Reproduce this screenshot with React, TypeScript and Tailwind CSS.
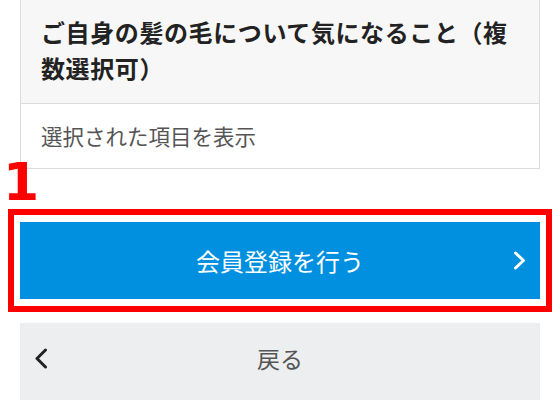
const ChevronRight = () => (
  <svg width="13" height="19" viewBox="0 0 13 19" fill="none" className="block">
    <polyline points="2.5,2 10.5,9.5 2.5,17" stroke="#ffffff" strokeWidth="3" strokeLinecap="round" strokeLinejoin="round" />
  </svg>
);

const ChevronLeft = () => (
  <svg width="14" height="21" viewBox="0 0 14 21" fill="none" className="block">
    <polyline points="11.5,2 3,10.5 11.5,19" stroke="#222222" strokeWidth="3" strokeLinecap="round" strokeLinejoin="round" />
  </svg>
);

export default function App() {
  return (
    <div className="w-[560px] h-[400px] overflow-hidden bg-white font-['Noto_Sans_CJK_JP','Noto_Sans',sans-serif]">
      <div className="flex flex-col px-5">
        {/* question card, its top lies above the viewport */}
        <div className="border-x border-b border-[#dcdcdc]">
          <div className="bg-[#f7f7f7] px-5 pt-[14px] pb-[17px] text-[24px] leading-[36px] font-bold tracking-[0.6px] text-[#222] border-b border-[#dcdcdc]">
            ご自身の髪の毛について気になること（複数選択可）
          </div>
          <div className="px-5 py-4 text-[21.5px] leading-8 text-[#555]">
            選択された項目を表示
          </div>
        </div>

        {/* annotated submit button */}
        <div className="relative -mx-3 mt-10">
          <span className="absolute -left-[5px] -top-[53px] text-[52px] leading-[52px] font-bold text-[#ff0000] font-['DejaVu_Sans',sans-serif]">
            1
          </span>
          <div className="border-[6px] border-[#ff0000] px-[6px] py-[7px]">
            <button className="grid h-[77px] w-full grid-cols-[1fr_auto_1fr] items-center bg-[#0090df] px-[14px] text-[24px] text-white">
              <span />
              <span>会員登録を行う</span>
              <span className="justify-self-end">
                <ChevronRight />
              </span>
            </button>
          </div>
        </div>

        <button className="mt-[11px] grid h-[77px] w-full grid-cols-[1fr_auto_1fr] items-center bg-[#eceef0] px-[14px] pb-[7px] text-[23px] text-[#555]">
          <span className="justify-self-start">
            <ChevronLeft />
          </span>
          <span>戻る</span>
          <span />
        </button>
      </div>
    </div>
  );
}
